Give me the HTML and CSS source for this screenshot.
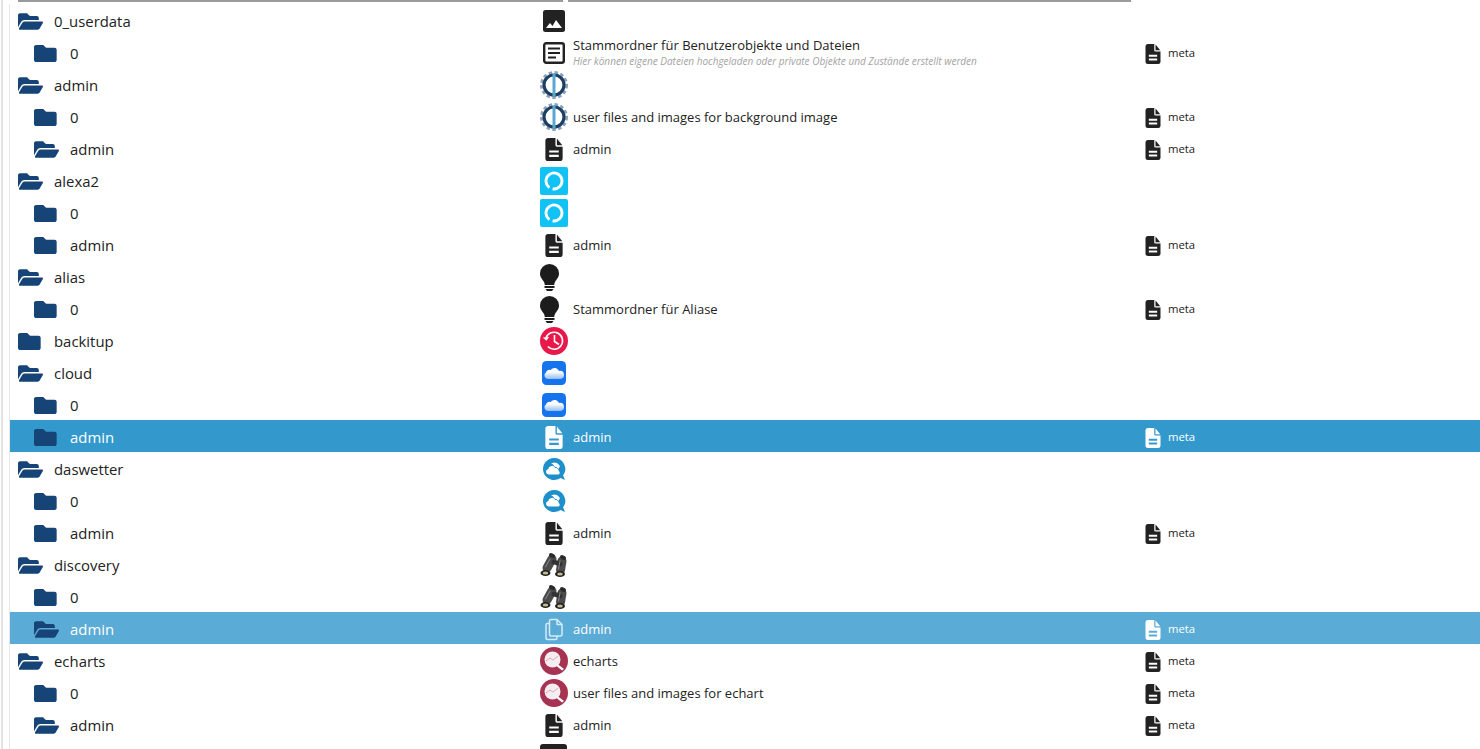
FILE: index.html
```html
<!DOCTYPE html>
<html lang="en">
<head>
    <meta charset="UTF-8">
    <meta name="viewport" content="width=device-width, initial-scale=1.0">
    <title>Files</title>
    <link rel="stylesheet" href="styles.css">
</head>
<body>

    <!-- Icon sheet -->
    <svg class="sheet" aria-hidden="true">
        <defs>
            <linearGradient id="cloudfill" x1="0" y1="0" x2="0" y2="1"><stop offset=".35" stop-color="#fff"/><stop offset="1" stop-color="#8fbcf5"/></linearGradient>
        </defs>
        <symbol id="folder" viewBox="0 64 512 384" preserveAspectRatio="xMinYMid"><path d="M464 128H272l-64-64H48C21.49 64 0 85.49 0 112v288c0 26.51 21.49 48 48 48h416c26.51 0 48-21.49 48-48V176c0-26.51-21.49-48-48-48z"/></symbol>
        <symbol id="folder-open" viewBox="0 64 576 384" preserveAspectRatio="xMinYMid"><path d="M572.694 292.093L500.27 416.248A63.997 63.997 0 0 1 444.989 448H45.025c-18.523 0-30.064-20.093-20.731-36.093l72.424-124.155A64 64 0 0 1 152 256h399.964c18.523 0 30.064 20.093 20.73 36.093zM152 224h328v-48c0-26.51-21.49-48-48-48H272l-64-64H48C21.49 64 0 85.49 0 112v278.046l69.077-118.418C86.214 242.25 117.989 224 152 224z"/></symbol>
        <symbol id="file" viewBox="0 0 18 24"><path fill-rule="evenodd" d="M3 0h7.500v7.500a1.500 1.500 0 0 0 1.500 1.500h6v12a3 3 0 0 1-3 3H3a3 3 0 0 1-3-3V3a3 3 0 0 1 3-3zM4 13v2.200h10V13zM4 17.500v2.200h10v-2.200z"/><path d="M12 .5l5.700 7H12z"/></symbol>
        <symbol id="copy" viewBox="0 0 18 22"><g fill="none" stroke="currentColor" stroke-width="1.500" stroke-linejoin="round"><path d="M6 1h6l5 5v10a1.500 1.500 0 0 1-1.500 1.500H6A1.500 1.500 0 0 1 4.500 16V2.500A1.500 1.500 0 0 1 6 1z"/><path d="M12 1v5h5"/><path d="M4.500 5H2.500A1.500 1.500 0 0 0 1 6.500v13A1.500 1.500 0 0 0 2.500 21h8a1.500 1.500 0 0 0 1.500-1.500v-2"/></g></symbol>
        <symbol id="image" viewBox="0 0 22 22"><rect width="22" height="22" rx="2.500" fill="#222"/><path d="M3 18l4-5 2.500 3 3.500-6 6 8z" fill="#fff"/></symbol>
        <symbol id="article" viewBox="0 0 22 22"><rect x="1.200" y="1.200" width="19.600" height="19.600" rx="2" fill="none" stroke="#222" stroke-width="2.400"/><path d="M5 6.500h12M5 11h12M5 15.500h8" stroke="#222" stroke-width="2"/></symbol>
        <symbol id="gear" viewBox="0 0 28 28"><circle cx="14" cy="14" r="12.700" fill="none" stroke="#8aa3bb" stroke-width="2.600" stroke-dasharray="3.500 2.500"/><circle cx="14" cy="14" r="10" fill="#fff" stroke="#1d3f63" stroke-width="3.200"/><rect x="12.500" y="2.500" width="3" height="23" fill="#5aa7cf"/></symbol>
        <symbol id="alexa" viewBox="0 0 28 28"><rect width="28" height="28" rx="2" fill="#10c3f4"/><path d="M9.400 20.550A8 8 0 1 1 12.600 21.880" fill="none" stroke="#fff" stroke-width="2.800"/></symbol>
        <symbol id="bulb" viewBox="0 0 19 27"><path d="M9.500 0A9.500 9.500 0 0 1 19 9.500c0 4-2.700 6-4 8.500-.5 1-.7 2-.8 3H4.800c-.1-1-.3-2-.8-3-1.300-2.500-4-4.500-4-8.500A9.500 9.500 0 0 1 9.500 0z" fill="#1c1c1c"/><path d="M4.500 22h10v2H4.500zM5.500 25h8l-1.500 2H7z" fill="#1c1c1c"/></symbol>
        <symbol id="backitup" viewBox="0 0 28 28"><circle cx="14" cy="14" r="14" fill="#e9184b"/><path d="M7.800 19.500A8.500 8.500 0 1 0 6 11" fill="none" stroke="#fff" stroke-width="1.600"/><path d="M2.800 10.500l3.500 3.200 2.800-3.800z" fill="#fff"/><path d="M14.500 8v6.500l4.500 3" fill="none" stroke="#fff" stroke-width="1.600"/></symbol>
        <symbol id="cloud" viewBox="0 0 24 24"><rect width="24" height="24" rx="4.500" fill="#1673ee"/><path d="M5.500 18A3.500 3.500 0 0 1 4 11.600 3.500 3.500 0 0 1 8.500 9a5 5 0 0 1 8.500 1 4 4 0 0 1 1.800 8z" fill="url(#cloudfill)"/></symbol>
        <symbol id="wetter" viewBox="0 0 24 24"><path d="M12 1a11 11 0 1 0 6.500 19.900L23 23l-1.900-4.500A11 11 0 0 0 12 1z" fill="#1d8fcb"/><path d="M12 5.500a6.500 6.500 0 0 1 6 4l-1.800 2.500A4.500 4.500 0 0 0 12.500 9.500 4.500 4.500 0 0 0 9 6.500z" fill="#fff"/><path d="M6.500 17.500a2.800 2.800 0 0 1-.3-5.500 3.700 3.700 0 0 1 7-1 3 3 0 0 1 3.500 3 2 2 0 0 1 0 3.500z" fill="#fff"/></symbol>
        <symbol id="binoculars" viewBox="0 0 28 24"><g fill="none" stroke-linecap="round"><path d="M12 6L7 15" stroke="#4b4b4b" stroke-width="9"/><path d="M22 8l-1.500 9" stroke="#4b4b4b" stroke-width="9"/><path d="M14 9l6 2" stroke="#333" stroke-width="5"/><path d="M11 2l2 1M22 4l2 1" stroke="#2a2a2a" stroke-width="4"/><path d="M10 6L5.500 14M20 8l-1.500 8" stroke="#8a8a8a" stroke-width="1"/></g><ellipse cx="5.500" cy="20" rx="5" ry="3" fill="#222"/><ellipse cx="20" cy="21" rx="5" ry="3" fill="#222"/><ellipse cx="5.500" cy="20" rx="2.800" ry="1.500" fill="#c9b98e"/><ellipse cx="20" cy="21" rx="2.800" ry="1.500" fill="#c9b98e"/></symbol>
        <symbol id="echarts" viewBox="0 0 28 28"><circle cx="14" cy="14" r="14" fill="#a73352"/><circle cx="12.500" cy="12.500" r="8" fill="#f6edf0"/><path d="M6 14l4-3 3 2 5-4" fill="none" stroke="#d7a9b7" stroke-width="1"/><path d="M17.500 17l6.500 5-2 1.500-5.500-4.500z" fill="#fff"/></symbol>
        <symbol id="square" viewBox="0 0 27 27"><rect width="27" height="27" rx="3" fill="#222"/></symbol>
    </svg>

    <div class="page">
        <div class="head">
            <span class="head-name"></span>
            <span class="head-desc"></span>
        </div>

        <div class="tree">
            <div class="row">
                <div class="name"><svg class="folder"><use href="#folder-open"/></svg>0_userdata</div>
                <div class="desc"><span class="pic"><svg class="s22"><use href="#image"/></svg></span></div>
            </div>
            <div class="row sub">
                <div class="name"><svg class="folder"><use href="#folder"/></svg>0</div>
                <div class="desc"><span class="pic"><svg class="s22"><use href="#article"/></svg></span>
                    <div class="text two">Stammordner für Benutzerobjekte und Dateien<small>Hier können eigene Dateien hochgeladen oder private Objekte und Zustände erstellt werden</small></div>
                </div>
                <div class="meta"><svg class="meta-file"><use href="#file"/></svg>meta</div>
            </div>
            <div class="row">
                <div class="name"><svg class="folder"><use href="#folder-open"/></svg>admin</div>
                <div class="desc"><span class="pic"><svg class="s28"><use href="#gear"/></svg></span></div>
            </div>
            <div class="row sub">
                <div class="name"><svg class="folder"><use href="#folder"/></svg>0</div>
                <div class="desc"><span class="pic"><svg class="s28"><use href="#gear"/></svg></span><div class="text">user files and images for background image</div></div>
                <div class="meta"><svg class="meta-file"><use href="#file"/></svg>meta</div>
            </div>
            <div class="row sub">
                <div class="name"><svg class="folder"><use href="#folder-open"/></svg>admin</div>
                <div class="desc"><span class="pic"><svg class="doc"><use href="#file"/></svg></span><div class="text">admin</div></div>
                <div class="meta"><svg class="meta-file"><use href="#file"/></svg>meta</div>
            </div>
            <div class="row">
                <div class="name"><svg class="folder"><use href="#folder-open"/></svg>alexa2</div>
                <div class="desc"><span class="pic"><svg class="s28"><use href="#alexa"/></svg></span></div>
            </div>
            <div class="row sub">
                <div class="name"><svg class="folder"><use href="#folder"/></svg>0</div>
                <div class="desc"><span class="pic"><svg class="s28"><use href="#alexa"/></svg></span></div>
            </div>
            <div class="row sub">
                <div class="name"><svg class="folder"><use href="#folder"/></svg>admin</div>
                <div class="desc"><span class="pic"><svg class="doc"><use href="#file"/></svg></span><div class="text">admin</div></div>
                <div class="meta"><svg class="meta-file"><use href="#file"/></svg>meta</div>
            </div>
            <div class="row">
                <div class="name"><svg class="folder"><use href="#folder-open"/></svg>alias</div>
                <div class="desc"><span class="pic start"><svg class="bulb"><use href="#bulb"/></svg></span></div>
            </div>
            <div class="row sub">
                <div class="name"><svg class="folder"><use href="#folder"/></svg>0</div>
                <div class="desc"><span class="pic start"><svg class="bulb"><use href="#bulb"/></svg></span><div class="text">Stammordner für Aliase</div></div>
                <div class="meta"><svg class="meta-file"><use href="#file"/></svg>meta</div>
            </div>
            <div class="row">
                <div class="name"><svg class="folder"><use href="#folder"/></svg>backitup</div>
                <div class="desc"><span class="pic"><svg class="s28"><use href="#backitup"/></svg></span></div>
            </div>
            <div class="row">
                <div class="name"><svg class="folder"><use href="#folder-open"/></svg>cloud</div>
                <div class="desc"><span class="pic"><svg class="s24"><use href="#cloud"/></svg></span></div>
            </div>
            <div class="row sub">
                <div class="name"><svg class="folder"><use href="#folder"/></svg>0</div>
                <div class="desc"><span class="pic"><svg class="s24"><use href="#cloud"/></svg></span></div>
            </div>
            <div class="row sub selected">
                <div class="name"><svg class="folder"><use href="#folder"/></svg>admin</div>
                <div class="desc"><span class="pic"><svg class="doc"><use href="#file"/></svg></span><div class="text">admin</div></div>
                <div class="meta"><svg class="meta-file"><use href="#file"/></svg>meta</div>
            </div>
            <div class="row">
                <div class="name"><svg class="folder"><use href="#folder-open"/></svg>daswetter</div>
                <div class="desc"><span class="pic"><svg class="s24"><use href="#wetter"/></svg></span></div>
            </div>
            <div class="row sub">
                <div class="name"><svg class="folder"><use href="#folder"/></svg>0</div>
                <div class="desc"><span class="pic"><svg class="s24"><use href="#wetter"/></svg></span></div>
            </div>
            <div class="row sub">
                <div class="name"><svg class="folder"><use href="#folder"/></svg>admin</div>
                <div class="desc"><span class="pic"><svg class="doc"><use href="#file"/></svg></span><div class="text">admin</div></div>
                <div class="meta"><svg class="meta-file"><use href="#file"/></svg>meta</div>
            </div>
            <div class="row">
                <div class="name"><svg class="folder"><use href="#folder-open"/></svg>discovery</div>
                <div class="desc"><span class="pic"><svg class="s-bino"><use href="#binoculars"/></svg></span></div>
            </div>
            <div class="row sub">
                <div class="name"><svg class="folder"><use href="#folder"/></svg>0</div>
                <div class="desc"><span class="pic"><svg class="s-bino"><use href="#binoculars"/></svg></span></div>
            </div>
            <div class="row sub focused">
                <div class="name"><svg class="folder"><use href="#folder-open"/></svg>admin</div>
                <div class="desc"><span class="pic"><svg class="doc"><use href="#copy"/></svg></span><div class="text">admin</div></div>
                <div class="meta"><svg class="meta-file"><use href="#file"/></svg>meta</div>
            </div>
            <div class="row">
                <div class="name"><svg class="folder"><use href="#folder-open"/></svg>echarts</div>
                <div class="desc"><span class="pic"><svg class="s28"><use href="#echarts"/></svg></span><div class="text">echarts</div></div>
                <div class="meta"><svg class="meta-file"><use href="#file"/></svg>meta</div>
            </div>
            <div class="row sub">
                <div class="name"><svg class="folder"><use href="#folder"/></svg>0</div>
                <div class="desc"><span class="pic"><svg class="s28"><use href="#echarts"/></svg></span><div class="text">user files and images for echart</div></div>
                <div class="meta"><svg class="meta-file"><use href="#file"/></svg>meta</div>
            </div>
            <div class="row sub">
                <div class="name"><svg class="folder"><use href="#folder-open"/></svg>admin</div>
                <div class="desc"><span class="pic"><svg class="doc"><use href="#file"/></svg></span><div class="text">admin</div></div>
                <div class="meta"><svg class="meta-file"><use href="#file"/></svg>meta</div>
            </div>
            <div class="row">
                <div class="name"></div>
                <div class="desc"><span class="pic"><svg class="s27"><use href="#square"/></svg></span></div>
            </div>
        </div>
    </div>

</body>
</html>
```

FILE: styles.css
```css
html, body {
    height: 100%;
    overflow: hidden;
}

body {
    margin: 0;
    background: #fff;
    color: #222;
    font-family: "Open Sans", "Noto Sans", sans-serif;
}

/* Holds the symbols, takes no room */
.sheet {
    display: block;
    width: 0;
    height: 0;
}

/* Outer panel edges */
.page {
    margin-left: 1px;
    padding-left: 6px;
    border-left: 2px solid #e2e2e2;
    height: 100%;
}

/* Table head, only its rule is in view */
.head {
    display: flex;
    height: 4px;
    margin-left: 1px;
    padding-left: 8px;
    gap: 5px;
}

.head-name,
.head-desc {
    height: 2px;
    background: #9a9a9a;
}

.head-name {
    width: 545px;
}

.head-desc {
    width: 563px;
}

.tree {
    border-left: 1px solid #e8e8e8;
    height: 100%;
}

/* Rows */
.row {
    display: flex;
    align-items: center;
    height: 32px;
}

.name {
    display: flex;
    align-items: center;
    width: 522px;
    padding-left: 8px;
    padding-top: 2px;
    font-size: 14.900px;
    white-space: nowrap;
}

.sub .name {
    width: 506px;
    padding-left: 24px;
}

.folder {
    width: 36px;
    height: 17px;
    flex: none;
    fill: #164477;
    padding-right: 11px;
    box-sizing: border-box;
}

.desc {
    display: flex;
    align-items: center;
    width: 605px;
    flex: none;
    height: 100%;
}

.pic {
    display: flex;
    align-items: center;
    justify-content: center;
    box-sizing: border-box;
    width: 28px;
    height: 100%;
    padding-top: 2px;
    flex: none;
    margin-right: 5px;
}

.pic.start {
    justify-content: flex-start;
}

.s22 { width: 22px; height: 22px; }
.s24 { width: 24px; height: 24px; }
.s27 { width: 27px; height: 27px; margin-left: -1px; }
.s28 { width: 28px; height: 28px; }
.s-bino { width: 28px; height: 26px; }
.bulb { width: 19px; height: 27px; }

.doc {
    width: 18px;
    height: 23px;
    fill: #222;
}

.text {
    font-size: 13px;
    line-height: 16px;
    padding-top: 2px;
    white-space: nowrap;
}

.text.two {
    padding-top: 0;
}

.text small {
    display: block;
    margin-top: 3px;
    font-size: 10px;
    font-style: italic;
    line-height: 11px;
    color: #a3a3a3;
}

.meta {
    display: flex;
    align-items: center;
    font-size: 11.300px;
    color: #1a1a1a;
}

.meta-file {
    width: 16px;
    height: 20px;
    margin-top: 3px;
    margin-right: 7px;
    fill: #222;
}

/* Selection states */
.selected {
    background: #3398cc;
    color: #fff;
}

.focused {
    background: #5aabd5;
    color: #fff;
}

.selected .meta,
.focused .meta {
    color: #fff;
}

.selected .doc,
.selected .meta-file,
.focused .meta-file {
    fill: #fff;
}

.focused .doc {
    color: #d4ecf8;
}
```
